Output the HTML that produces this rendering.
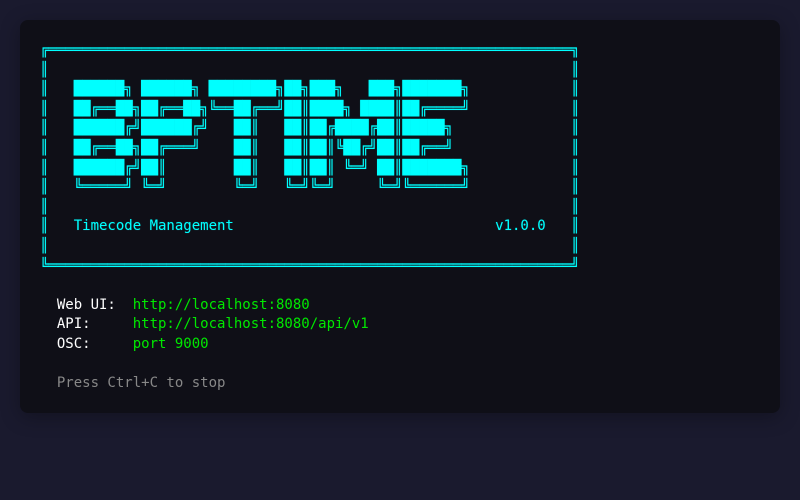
<!DOCTYPE html>
<html lang="en">
<head>
<meta charset="utf-8">
<title>BPTIME</title>
<style>
html,body{margin:0;padding:0;width:800px;height:500px;overflow:hidden;background:#1a1a2e}
.term{position:absolute;left:20px;top:20px;width:720px;height:352px;padding:21px 20px 20px;background:#0f0f17;border-radius:8px;box-shadow:0 4px 20px rgba(0,0,0,.3)}
pre{margin:0;font-family:"DejaVu Sans Mono",monospace;font-size:14px;line-height:1.4;color:#fff;white-space:pre}
.c{color:#0ff;text-shadow:0 0 1px rgba(0,255,255,.3)}.g{color:#00e800}.m{color:#888}
</style>
</head>
<body>
<div class="term"><pre><span class="c">╔══════════════════════════════════════════════════════════════╗
║                                                              ║
║   ██████╗ ██████╗ ████████╗██╗███╗   ███╗███████╗            ║
║   ██╔══██╗██╔══██╗╚══██╔══╝██║████╗ ████║██╔════╝            ║
║   ██████╔╝██████╔╝   ██║   ██║██╔████╔██║█████╗              ║
║   ██╔══██╗██╔═══╝    ██║   ██║██║╚██╔╝██║██╔══╝              ║
║   ██████╔╝██║        ██║   ██║██║ ╚═╝ ██║███████╗            ║
║   ╚═════╝ ╚═╝        ╚═╝   ╚═╝╚═╝     ╚═╝╚══════╝            ║
║                                                              ║
║   Timecode Management                               v1.0.0   ║
║                                                              ║
╚══════════════════════════════════════════════════════════════╝</span>

  Web UI:  <span class="g">http://localhost:8080</span>
  API:     <span class="g">http://localhost:8080/api/v1</span>
  OSC:     <span class="g">port 9000</span>

  <span class="m">Press Ctrl+C to stop</span></pre></div>
</body>
</html>
